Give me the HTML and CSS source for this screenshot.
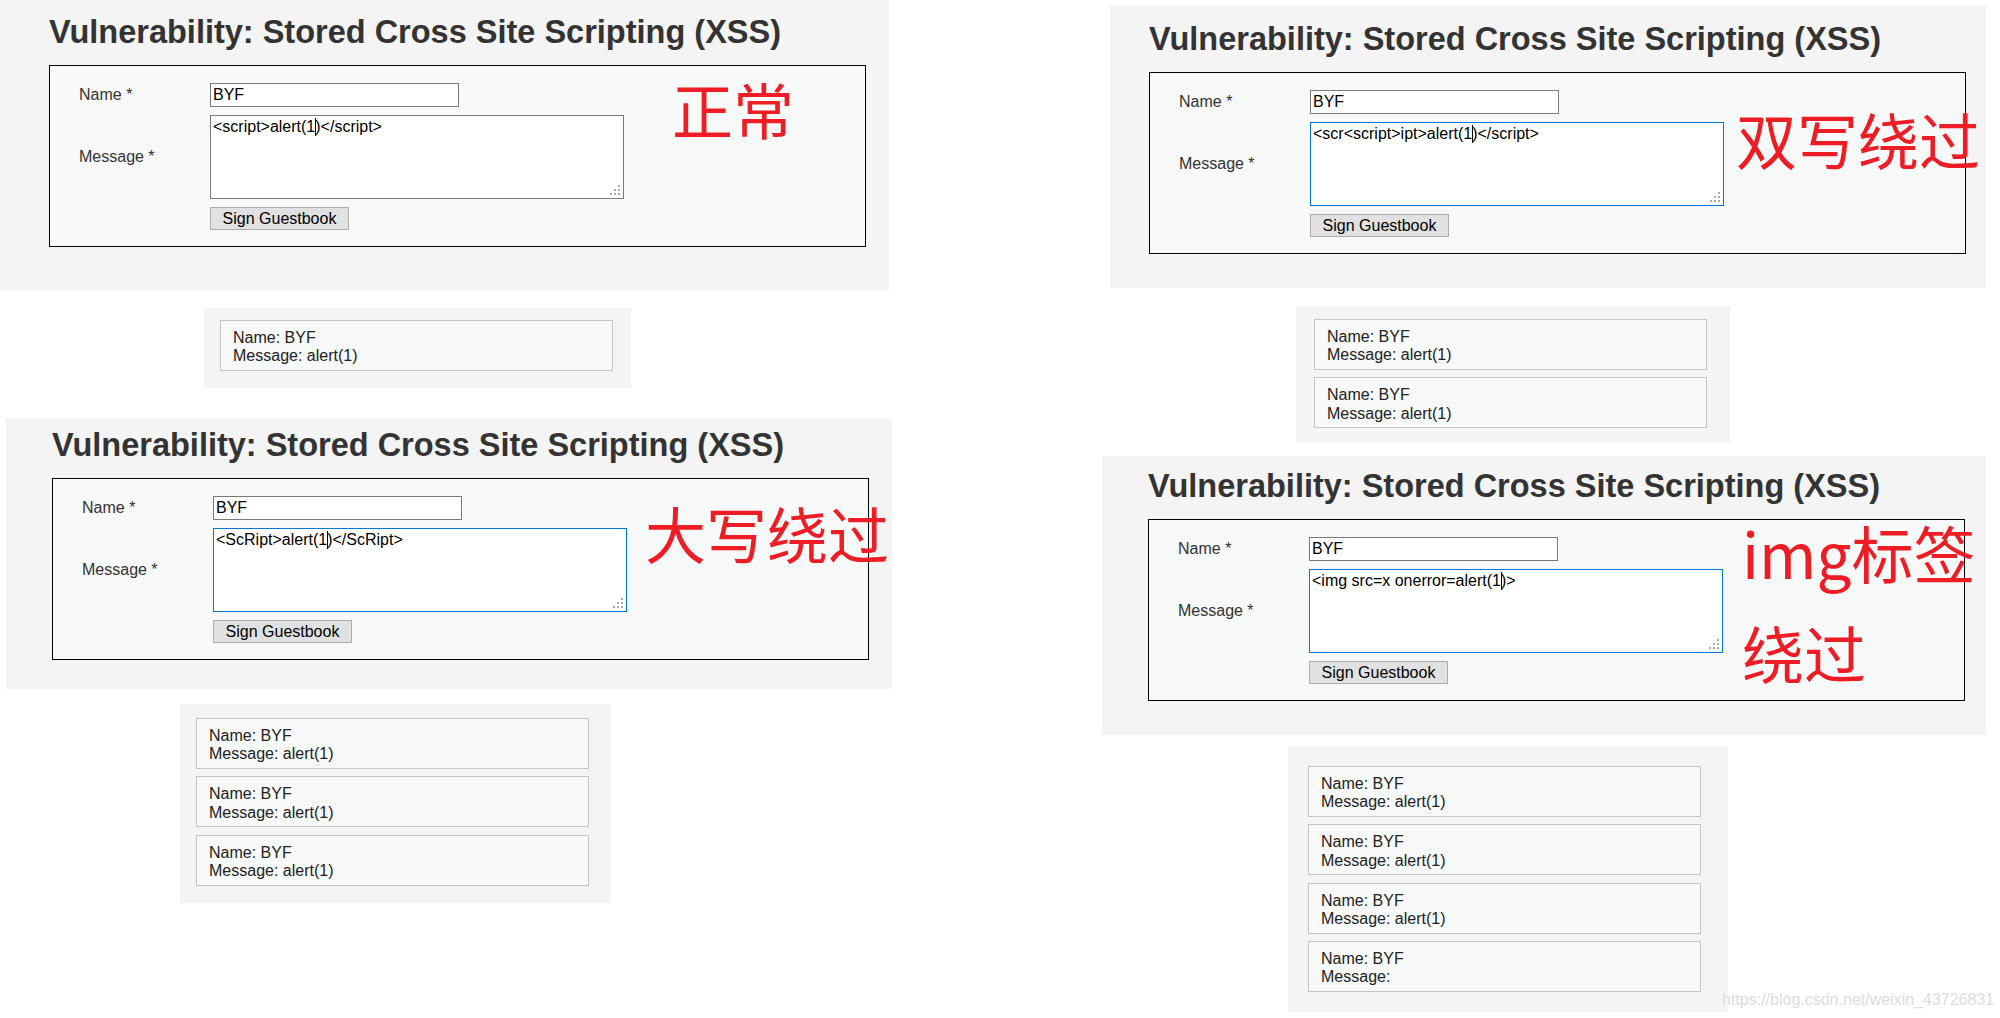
FILE: index.html
```html
<!DOCTYPE html>
<html lang="zh-CN">
<head>
  <meta charset="UTF-8" />
  <meta name="viewport" content="width=device-width, initial-scale=1.0"/>
  <title>Stored XSS - bypass notes</title>

  <link rel="stylesheet" href="styles.css">
</head>
<body>

  <div class="canvas">

    <!-- normal -->
    <section class="shot dvwa shot-normal">
      <h1>Vulnerability: Stored Cross Site Scripting (XSS)</h1>
      <div class="vuln-form">
        <span class="label">Name *</span>
        <div class="text-input">BYF</div>
        <span class="label">Message *</span>
        <div class="text-area">&lt;script&gt;alert(1<span class="caret"></span>)&lt;/script&gt;<svg class="grip" width="10" height="10" viewBox="0 0 10 10"><rect x="8" y="0" width="2" height="2"/><rect x="4" y="4" width="2" height="2"/><rect x="8" y="4" width="2" height="2"/><rect x="0" y="8" width="2" height="2"/><rect x="4" y="8" width="2" height="2"/><rect x="8" y="8" width="2" height="2"/></svg></div>
        <span></span>
        <button class="sign-btn">Sign Guestbook</button>
      </div>
      <div class="note">正常</div>
    </section>

    <div class="shot guestbook gb-normal">
      <div class="entry">Name: BYF<br>Message: alert(1)</div>
    </div>

    <!-- upper case -->
    <section class="shot dvwa shot-upper">
      <h1>Vulnerability: Stored Cross Site Scripting (XSS)</h1>
      <div class="vuln-form">
        <span class="label">Name *</span>
        <div class="text-input">BYF</div>
        <span class="label">Message *</span>
        <div class="text-area focused">&lt;ScRipt&gt;alert(1<span class="caret"></span>)&lt;/ScRipt&gt;<svg class="grip" width="10" height="10" viewBox="0 0 10 10"><rect x="8" y="0" width="2" height="2"/><rect x="4" y="4" width="2" height="2"/><rect x="8" y="4" width="2" height="2"/><rect x="0" y="8" width="2" height="2"/><rect x="4" y="8" width="2" height="2"/><rect x="8" y="8" width="2" height="2"/></svg></div>
        <span></span>
        <button class="sign-btn">Sign Guestbook</button>
      </div>
      <div class="note">大写绕过</div>
    </section>

    <div class="shot guestbook gb-upper">
      <div class="entry">Name: BYF<br>Message: alert(1)</div>
      <div class="entry">Name: BYF<br>Message: alert(1)</div>
      <div class="entry">Name: BYF<br>Message: alert(1)</div>
    </div>

    <!-- double write -->
    <section class="shot dvwa shot-double">
      <h1>Vulnerability: Stored Cross Site Scripting (XSS)</h1>
      <div class="vuln-form">
        <span class="label">Name *</span>
        <div class="text-input">BYF</div>
        <span class="label">Message *</span>
        <div class="text-area focused">&lt;scr&lt;script&gt;ipt&gt;alert(1<span class="caret"></span>)&lt;/script&gt;<svg class="grip" width="10" height="10" viewBox="0 0 10 10"><rect x="8" y="0" width="2" height="2"/><rect x="4" y="4" width="2" height="2"/><rect x="8" y="4" width="2" height="2"/><rect x="0" y="8" width="2" height="2"/><rect x="4" y="8" width="2" height="2"/><rect x="8" y="8" width="2" height="2"/></svg></div>
        <span></span>
        <button class="sign-btn">Sign Guestbook</button>
      </div>
      <div class="note">双写绕过</div>
    </section>

    <div class="shot guestbook gb-double">
      <div class="entry">Name: BYF<br>Message: alert(1)</div>
      <div class="entry">Name: BYF<br>Message: alert(1)</div>
    </div>

    <!-- img tag -->
    <section class="shot dvwa shot-img">
      <h1>Vulnerability: Stored Cross Site Scripting (XSS)</h1>
      <div class="vuln-form">
        <span class="label">Name *</span>
        <div class="text-input">BYF</div>
        <span class="label">Message *</span>
        <div class="text-area focused">&lt;img src=x onerror=alert(1<span class="caret"></span>)&gt;<svg class="grip" width="10" height="10" viewBox="0 0 10 10"><rect x="8" y="0" width="2" height="2"/><rect x="4" y="4" width="2" height="2"/><rect x="8" y="4" width="2" height="2"/><rect x="0" y="8" width="2" height="2"/><rect x="4" y="8" width="2" height="2"/><rect x="8" y="8" width="2" height="2"/></svg></div>
        <span></span>
        <button class="sign-btn">Sign Guestbook</button>
      </div>
      <div class="note note-tall">img标签<br>绕过</div>
    </section>

    <div class="shot guestbook gb-img">
      <div class="entry">Name: BYF<br>Message: alert(1)</div>
      <div class="entry">Name: BYF<br>Message: alert(1)</div>
      <div class="entry">Name: BYF<br>Message: alert(1)</div>
      <div class="entry">Name: BYF<br>Message: </div>
    </div>

    <span class="watermark">https://blog.csdn.net/weixin_43726831</span>
  </div>

</body>
</html>
```

FILE: styles.css
```css
* {
  box-sizing: border-box;
}

body {
  font-family: "Liberation Sans", Arial, sans-serif;
  background-color: #fff;
  margin: 0;
  padding: 0;
}

.canvas {
  position: relative;
  width: 2000px;
  height: 1018px;
  overflow: hidden;
}

/* each screenshot sits where it was pasted */
.shot {
  position: absolute;
  background-color: #f4f4f4;
}

.shot-normal { left: 0;      top: 0;   width: 889px; height: 291px; padding: 13px 0 0 49px; }
.shot-upper  { left: 6px;    top: 418px; width: 886px; height: 271px; padding: 8px 0 0 46px; }
.shot-double { left: 1110px; top: 6px; width: 876px; height: 282px; padding: 14px 0 0 39px; }
.shot-img    { left: 1102px; top: 456px; width: 884px; height: 279px; padding: 11px 0 0 46px; }

.shot-upper h1 {
  margin-bottom: 15px;
}

.dvwa h1 {
  margin: 0 0 14px 0;
  font-size: 32.5px;
  line-height: 38px;
  font-weight: bold;
  color: #333;
  white-space: nowrap;
}

.vuln-form {
  width: 817px;
  height: 182px;
  border: 1px solid #000;
  background-color: #f7f8f8;
  padding: 17px 0 0 29px;
  display: grid;
  grid-template-columns: 131px auto;
  row-gap: 8px;
  align-items: center;
  justify-items: start;
  align-content: start;
}

.label {
  font-size: 16px;
  color: #333;
}

.text-input,
.text-area {
  background-color: #fff;
  border: 1px solid #7a7a7a;
  font-size: 16px;
  color: #000;
  padding: 0 2px;
  white-space: nowrap;
}

.text-input {
  width: 249px;
  height: 24px;
  line-height: 22px;
}

.text-area {
  position: relative;
  width: 414px;
  height: 84px;
  line-height: 18px;
  padding-top: 2px;
}

.text-area.focused {
  border-color: #0078d7;
}

.caret {
  display: inline-block;
  width: 1px;
  height: 18px;
  margin-right: -1px;
  background-color: #000;
  vertical-align: -4px;
}

.grip {
  position: absolute;
  right: 3px;
  bottom: 3px;
  fill: #a8a8a8;
}

.sign-btn {
  height: 23px;
  width: 139px;
  padding: 0;
  border: 1px solid #adadad;
  background-color: #e1e1e1;
  font-family: "Liberation Sans", Arial, sans-serif;
  font-size: 16px;
  color: #000;
  border-radius: 0;
}

/* red notes written over the screenshots */
.note {
  position: absolute;
  font-family: "Noto Sans CJK SC", sans-serif;
  font-size: 61px;
  line-height: 62px;
  color: #ee1c24;
  white-space: nowrap;
}

.shot-normal .note { left: 672px; top: 78px; }
.shot-upper .note  { left: 639px; top: 84px; }
.shot-double .note { left: 626px; top: 102px; }
.shot-img .note    { left: 640px; top: 46px; font-size: 62px; line-height: 100px; }

/* guestbook listings */
.guestbook {
  display: flex;
  flex-direction: column;
  gap: 7.3px;
}

.gb-normal { left: 204px;  top: 308px; width: 427px; height: 80px;  padding: 12px 0 0 16px; }
.gb-upper  { left: 180px;  top: 704px; width: 431px; height: 199px; padding: 14px 0 0 16px; }
.gb-double { left: 1296px; top: 306px; width: 434px; height: 137px; padding: 13px 0 0 18px; }
.gb-img    { left: 1288px; top: 746px; width: 440px; height: 266px; padding: 20px 0 0 20px; }

.entry {
  width: 393px;
  height: 51px;
  border: 1px solid #c4c4c4;
  background-color: #f7f8f8;
  padding: 8px 12px 4px 12px;
  font-size: 16px;
  line-height: 18.4px;
  color: #222;
}

.watermark {
  position: absolute;
  left: 1722px;
  top: 991px;
  font-size: 16px;
  color: #dcdcdc;
  white-space: nowrap;
}
```
